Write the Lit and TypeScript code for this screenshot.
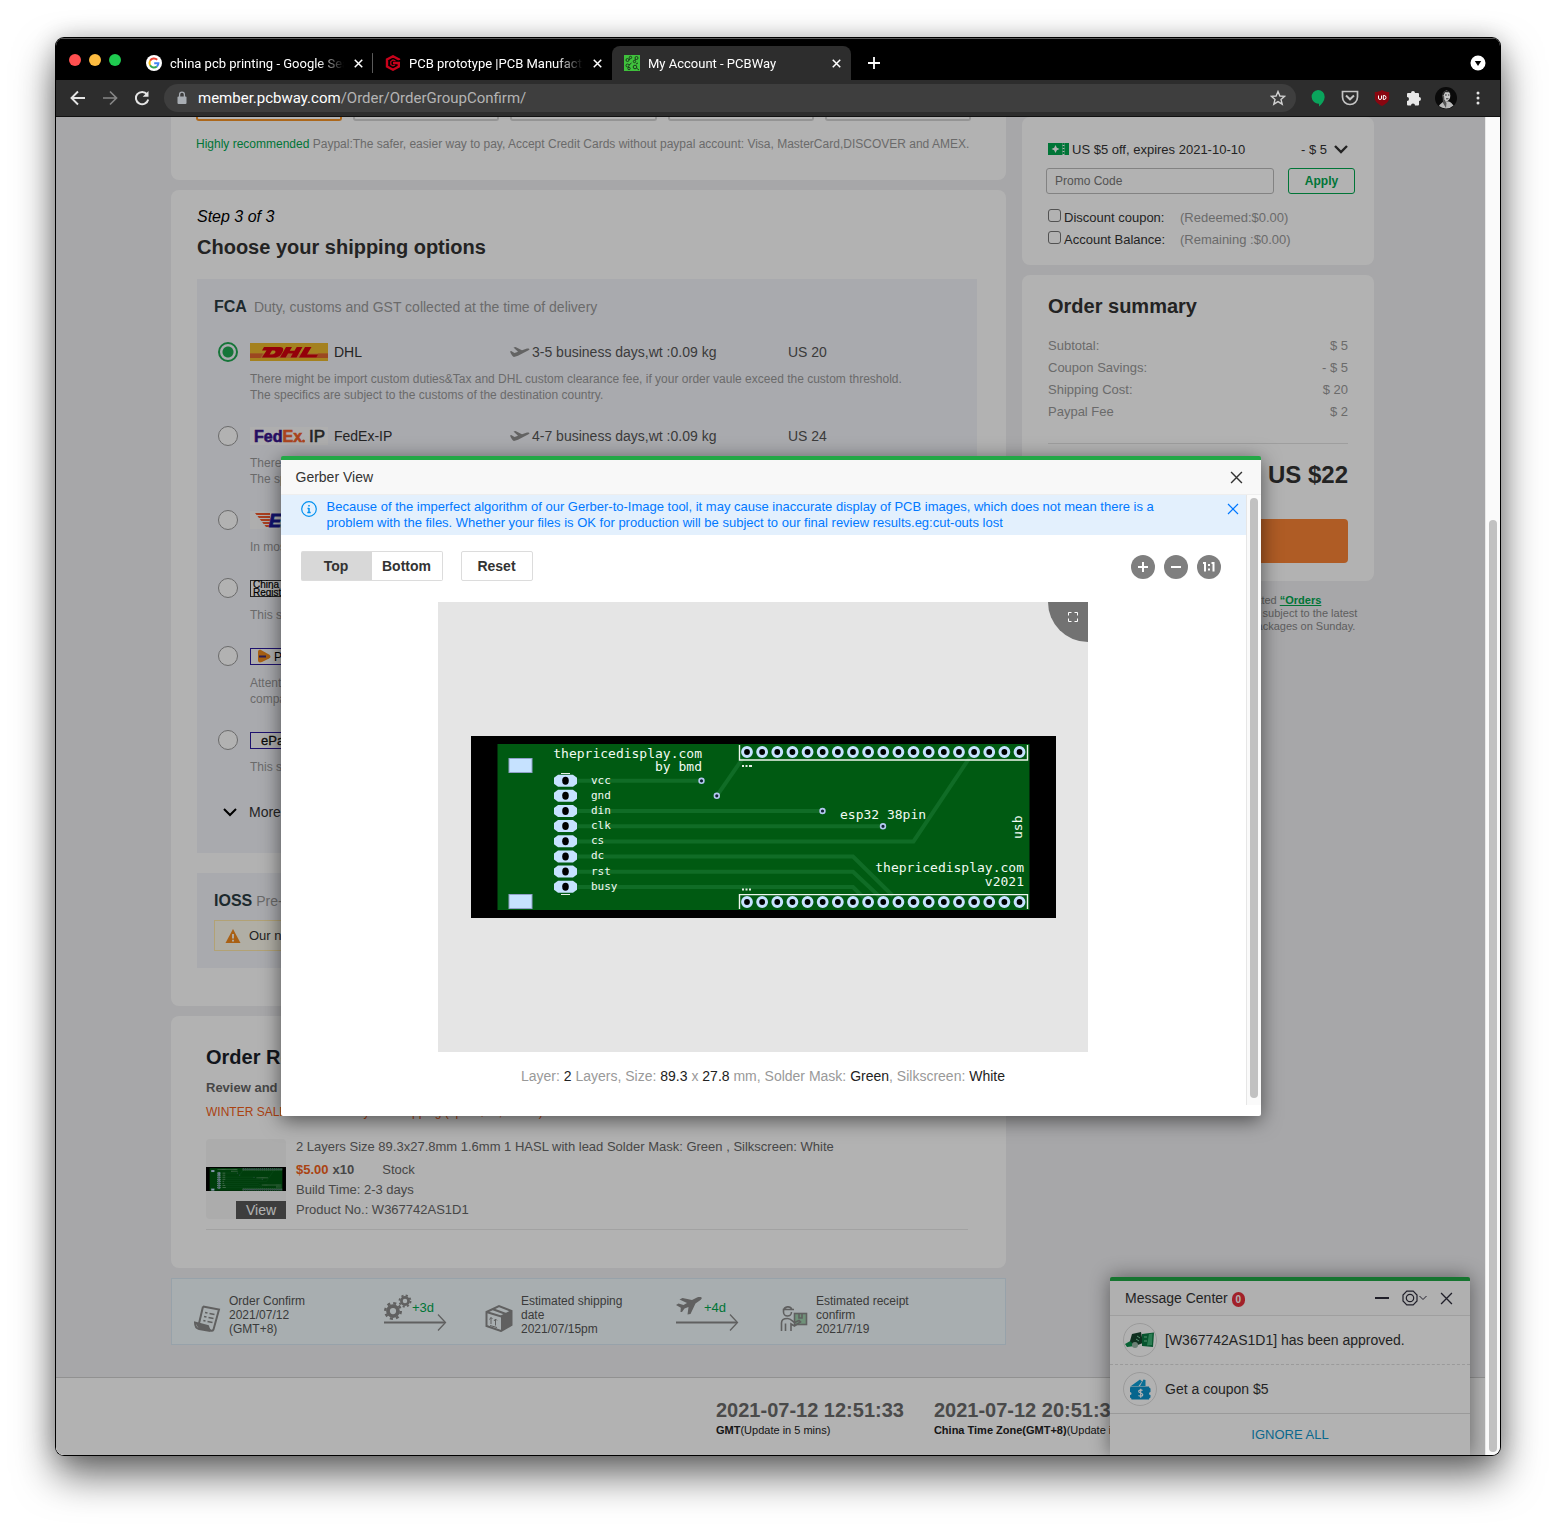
import { LitElement, html, svg, css, nothing } from "lit";
import { customElement } from "lit/decorators.js";
import { classMap } from "lit/directives/class-map.js";

const base = css`
  *,
  *::before,
  *::after {
    box-sizing: border-box;
  }
  h1,
  h2,
  p,
  dl,
  dd,
  ul {
    margin: 0;
    padding: 0;
  }
  button {
    font: inherit;
    color: inherit;
    background: none;
    border: 0;
    padding: 0;
    cursor: pointer;
  }
  svg {
    display: block;
    flex: none;
  }
`;

/* ---------- circuit board drawing ---------- */

const pinXs = Array.from({ length: 19 }, (_, i) => 747 + i * 15.14);
const padYs = Array.from({ length: 8 }, (_, i) => 780.7 + i * 15.14);
const padNames = ["vcc", "gnd", "din", "clk", "cs", "dc", "rst", "busy"];
const vias = [
  [701.5, 780.8],
  [716.8, 795.8],
  [822.5, 811],
  [883, 826.3],
];

const board = (labels: boolean) => html`
  <svg class="board" viewBox="471 736 585 182" role="img" aria-label="Board preview">
    <rect x="471" y="736" width="585" height="182" fill="#000" />
    <rect x="497.5" y="744" width="532" height="166" fill="#005a12" />
    <g fill="none" stroke="#106c26" stroke-width="4">
      <path d="M577 780.8H701" />
      <path d="M716.8 795.8L743 758" />
      <path d="M577 811H822" />
      <path d="M577 826.3H883" />
      <path d="M577 841.4H913.5L970 757" />
      <path d="M577 856.5H853L893 896" />
      <path d="M577 871.8H853L881 898" />
      <path d="M577 887H853L864 898" />
    </g>
    <g fill="#c6e2ff" stroke="#8fa0c8" stroke-width="1">
      <rect x="509" y="758.5" width="23" height="14" />
      <rect x="509" y="894.5" width="23" height="14" />
    </g>
    <path d="M561 773.5H570M561 894.5H570" stroke="#e6f0e6" stroke-width="1" />
    ${padYs.map(
      (y) => svg`<g>
        <path d=${`M558 ${y - 6}H573L577 ${y - 3}V${y + 3}L573 ${y + 6}H558L554 ${y + 3}V${y - 3}Z`} fill="#c6e2ff" />
        <ellipse cx="565.5" cy=${y} rx="3.3" ry="4" fill="#000" /></g>`
    )}
    <g fill="none" stroke="#eef6ee" stroke-width="1.4">
      <path d="M739.5 745V760H1027.5V745" />
      <path d="M739.5 909V894.6H1027.5V909" />
    </g>
    ${[752, 902].map((y) =>
      pinXs.map(
        (x) => svg`<circle cx=${x} cy=${y} r="4.4" fill="#000" stroke="#c6e2ff" stroke-width="3" />`
      )
    )}
    ${vias.map(
      ([x, y]) => svg`<circle cx=${x} cy=${y} r="2.4" fill="#123" stroke="#b4c8f0" stroke-width="1.6" />`
    )}
    ${labels
      ? svg`<g class="silk">
          <text x="702" y="758" text-anchor="end">thepricedisplay.com</text>
          <text x="702" y="771" text-anchor="end">by bmd</text>
          <text x="840" y="819">esp32 38pin</text>
          <text x="1024" y="872" text-anchor="end">thepricedisplay.com</text>
          <text x="1024" y="886" text-anchor="end">v2021</text>
          <text transform="translate(1022 839) rotate(-90)">usb</text>
          ${padNames.map((n, i) => svg`<text class="pad-name" x="591" y=${padYs[i] + 3}>${n}</text>`)}
        </g>
        <path d="M742 766h2m1.500 0h2m1.500 0h3" stroke="#e6f0e6" stroke-width="2" />
        <path d="M742 889.500h2m1.500 0h2m1.500 0h2" stroke="#e6f0e6" stroke-width="2" />`
      : svg`<path d="M556 754H702M655 767H702M841 815H925M879 868H1024M984 882H1024" stroke="#9fc0a5" stroke-width="5" stroke-dasharray="6 2" />
        <path d="M592 781h20M592 796h20M592 811h20M592 826h20M592 841h12M592 856h12M592 871h20M592 886h24" stroke="#9fc0a5" stroke-width="4" />`}
  </svg>
`;

/* ---------- shared glyphs ---------- */

const cross = (size: number, width = 1.5) => html`
  <svg width=${size} height=${size} viewBox="0 0 12 12" fill="none" stroke="currentColor" stroke-width=${width}>
    <path d="M1 1L11 11M11 1L1 11" />
  </svg>
`;

const chevron = (width = 2) => html`
  <svg width="14" height="14" viewBox="0 0 14 14" fill="none" stroke="currentColor" stroke-width=${width}>
    <path d="M1 4L7 10L13 4" />
  </svg>
`;

/* ---------- browser bars ---------- */

const googleIcon = html`<svg width="16" height="16" viewBox="0 0 16 16">
  <circle cx="8" cy="8" r="8" fill="#fff" />
  <g fill="none" stroke-width="2">
    <path d="M11.200 4.800A4.500 4.500 0 0 0 4.100 5.750" stroke="#ea4335" />
    <path d="M4.100 5.750A4.500 4.500 0 0 0 4.100 10.250" stroke="#fbbc05" />
    <path d="M4.100 10.250A4.500 4.500 0 0 0 10.900 11.450" stroke="#34a853" />
    <path d="M10.900 11.450A4.500 4.500 0 0 0 12.400 8.200H8.200" stroke="#4285f4" />
  </g>
</svg>`;

const hexIcon = html`<svg width="16" height="16" viewBox="0 0 16 16" fill="none" stroke="#c8021b">
  <path d="M14 5V4.500L8 1.300L2 4.500V11.500L8 14.700L13.800 11.500V8H8" stroke-width="2.400" />
  <path d="M10.500 6L8 5L5.800 6.500V9.600L8 10.900L10 10" stroke-width="1.200" />
</svg>`;

const pcbIcon = html`<svg width="16" height="16" viewBox="0 0 16 16">
  <rect width="16" height="16" fill="#3fc13c" />
  <g fill="none" stroke="#1d3a1d" stroke-width="1">
    <circle cx="3.500" cy="5" r="1.500" />
    <circle cx="6.500" cy="2.500" r="1.200" />
    <circle cx="12.500" cy="3" r="1.500" />
    <circle cx="10.500" cy="6.500" r="1.200" />
    <circle cx="3.500" cy="10.500" r="1.500" />
    <circle cx="5" cy="13.500" r="1.200" />
    <circle cx="11" cy="12" r="1.800" />
    <path d="M5 5L6 3.700M11.500 4L11 5.300M5 10L7.500 8M4 12L4.500 12.500M12.500 13L15 15M14 8L12 9" />
  </g>
</svg>`;

@customElement("browser-bars")
export class BrowserBars extends LitElement {
  static styles = [
    base,
    css`
      :host {
        display: block;
        font-family: Roboto, "Liberation Sans", sans-serif;
        color: #fff;
      }
      .strip {
        display: flex;
        align-items: flex-end;
        height: 42px;
        background: #000;
        border-top: 1px solid #5a5a5a;
        padding-right: 14px;
      }
      .lights {
        display: flex;
        gap: 8px;
        width: 78px;
        padding-left: 13px;
        align-self: center;
      }
      .light {
        width: 12px;
        height: 12px;
        border-radius: 50%;
      }
      .red {
        background: #ff5050;
      }
      .amber {
        background: #fdbc40;
      }
      .green {
        background: #1fcb50;
      }
      .tab {
        display: flex;
        align-items: center;
        gap: 8px;
        width: 239px;
        height: 34px;
        padding: 0 9px 0 12px;
        border-radius: 8px 8px 0 0;
        font-size: 13px;
      }
      .tab.active {
        background: #2d2d2d;
      }
      .tab.ruled {
        background: linear-gradient(#5a5a5a, #5a5a5a) right center / 1px 20px no-repeat;
      }
      .title {
        flex: 1;
        overflow: hidden;
        white-space: nowrap;
        mask-image: linear-gradient(to right, #000 85%, transparent);
      }
      .icon-button {
        display: grid;
        place-items: center;
        width: 32px;
        height: 28px;
        color: #e4e4e4;
      }
      .tab .icon-button {
        width: 12px;
        color: #fff;
      }
      .plus {
        align-self: flex-end;
        height: 34px;
        margin-left: 7px;
      }
      .spacer {
        flex: 1;
      }
      .caret {
        display: grid;
        place-items: center;
        height: 34px;
      }
      .toolbar {
        display: flex;
        align-items: center;
        height: 37px;
        padding: 0 6px;
        background: #2d2d2d;
        border-bottom: 1px solid #111;
      }
      .address {
        flex: 1;
        display: flex;
        align-items: center;
        gap: 10px;
        height: 28px;
        margin: 0 6px;
        padding: 0 2px 0 12px;
        border-radius: 14px;
        background: #3e3e3e;
        font-size: 15px;
      }
      .url {
        flex: 1;
        color: #b4b4b4;
      }
      .host {
        color: #fff;
      }
      .faded {
        color: #858585;
      }
    `,
  ];

  private tab(icon: unknown, title: string, cls = {}) {
    return html`<div class=${classMap({ tab: true, ...cls })}>
      ${icon}<span class="title">${title}</span>
      <button class="icon-button" aria-label="Close tab">${cross(9, 2)}</button>
    </div>`;
  }

  render() {
    return html`
      <div class="strip">
        <div class="lights">
          <span class="light red"></span><span class="light amber"></span><span class="light green"></span>
        </div>
        ${this.tab(googleIcon, "china pcb printing - Google Search", { ruled: true })}
        ${this.tab(hexIcon, "PCB prototype |PCB Manufacturer")}
        ${this.tab(pcbIcon, "My Account - PCBWay", { active: true })}
        <button class="icon-button plus" aria-label="New tab">
          <svg width="12" height="12" viewBox="0 0 12 12" stroke="#fff" stroke-width="1.800"><path d="M6 0V12M0 6H12" /></svg>
        </button>
        <span class="spacer"></span>
        <button class="caret" aria-label="Search tabs">
          <svg width="16" height="16" viewBox="0 0 16 16">
            <circle cx="8" cy="8" r="7.500" fill="#fff" /><path d="M4.800 6H11.200L8 11Z" fill="#000" />
          </svg>
        </button>
      </div>
      <div class="toolbar">
        <button class="icon-button" aria-label="Back">
          <svg width="16" height="16" viewBox="0 0 16 16" fill="none" stroke="currentColor" stroke-width="1.900">
            <path d="M15 8H2M8 1.500L1.500 8L8 14.500" />
          </svg>
        </button>
        <button class="icon-button faded" aria-label="Forward">
          <svg width="16" height="16" viewBox="0 0 16 16" fill="none" stroke="currentColor" stroke-width="1.700">
            <path d="M1 8H14M8 1.500L14.500 8L8 14.500" />
          </svg>
        </button>
        <button class="icon-button" aria-label="Reload">
          <svg width="16" height="16" viewBox="0 0 16 16" fill="none" stroke="currentColor" stroke-width="2">
            <path d="M13 4.200A6.200 6.200 0 1 0 14.200 9.500" /><path d="M14.500 1V6.800H8.700Z" fill="currentColor" stroke="none" />
          </svg>
        </button>
        <div class="address">
          <svg width="12" height="14" viewBox="0 0 12 14">
            <rect x="1.500" y="5.500" width="9" height="7.500" rx="1" fill="#a8adb3" />
            <path d="M3.600 6V3.600a2.400 2.400 0 0 1 4.800 0V6" fill="none" stroke="#a8adb3" stroke-width="1.300" />
          </svg>
          <span class="url"><span class="host">member.pcbway.com</span>/Order/OrderGroupConfirm/</span>
          <button class="icon-button" aria-label="Bookmark">
            <svg width="16" height="16" viewBox="0 0 16 16" fill="none" stroke="#d0d0d0" stroke-width="1.400">
              <path d="M8 1.500L9.900 6L14.700 6.300L11 9.400L12.200 14.200L8 11.600L3.800 14.200L5 9.400L1.300 6.300L6.100 6Z" />
            </svg>
          </button>
        </div>
        <button class="icon-button" aria-label="Green bubble extension">
          <svg width="16" height="18" viewBox="0 0 16 18"><path d="M8 1a6.700 6.700 0 0 1 6.700 7C14.500 12 12 15 9 17.500V14.700A6.800 6.800 0 0 1 8 1Z" fill="#0aa45c" /></svg>
        </button>
        <button class="icon-button" aria-label="Pocket">
          <svg width="18" height="16" viewBox="0 0 18 16" fill="none" stroke="#c4c4c4" stroke-width="1.700">
            <path d="M1.500 1.500H16.500V7A7.500 7.500 0 0 1 1.500 7Z" /><path d="M5 5.500L9 9.300L13 5.500" stroke-width="2" />
          </svg>
        </button>
        <button class="icon-button" aria-label="Shield extension">
          <svg width="16" height="18" viewBox="0 0 16 18">
            <path d="M8 1C6 2.500 3 3 .8 3V9C.8 13 5 15.500 8 17C11 15.500 15.200 13 15.200 9V3C13 3 10 2.500 8 1Z" fill="#890610" />
            <path d="M4.500 6.500V9a1.500 1.500 0 0 0 3 0V6.500M9.300 6.500V10.500H10a2 2 0 0 0 0-4Z" fill="none" stroke="#fff" stroke-width="1" />
          </svg>
        </button>
        <button class="icon-button" aria-label="Extensions">
          <svg width="16" height="16" viewBox="0 0 16 16">
            <path d="M5 3a2 2 0 0 1 4 0h3a1 1 0 0 1 1 1V7a2 2 0 0 1 0 4v3.500a1 1 0 0 1-1 1H9a2 2 0 0 0-4 0H2a1 1 0 0 1-1-1V11a2 2 0 0 0 0-4V4a1 1 0 0 1 1-1Z" fill="#e8e8e8" />
          </svg>
        </button>
        <button class="icon-button" aria-label="Profile">
          <svg width="22" height="22" viewBox="0 0 22 22">
            <circle cx="11" cy="11" r="11" fill="#0a0a0a" />
            <path d="M4 19C6 15.500 9 15 9.500 14L14 14.500C16 15.500 17.500 17 18.500 18.500A11 11 0 0 1 4 19Z" fill="#b9b9b9" />
            <ellipse cx="11.500" cy="8.800" rx="3.800" ry="5.400" fill="#c9c9c9" />
            <path d="M7.300 8C7 2.500 16 2 15.700 8L14.500 5.300H10L8.800 8Z" fill="#2a2a2a" />
            <path d="M7.500 8L9 8.500 9.500 13 11.500 16 11 21 8 16Z" fill="#555" />
            <path d="M10 8h1.800M13 8h1.400M11 11.800h2.500" stroke="#333" />
          </svg>
        </button>
        <button class="icon-button" aria-label="Menu">
          <svg width="4" height="14" viewBox="0 0 4 14" fill="currentColor">
            <circle cx="2" cy="2" r="1.500" /><circle cx="2" cy="7" r="1.500" /><circle cx="2" cy="12" r="1.500" />
          </svg>
        </button>
      </div>
    `;
  }
}

/* ---------- order page ---------- */

const plane = html`<svg width="20" height="12" viewBox="0 0 20 12" fill="#8f8f8f">
  <path d="M0 5.500L1.200 5L4.500 7L8 5.700L3.500 1.600L5.500 1L12 4.300L17 2.600C19 2 20.500 3.400 18.500 4.300L8 9.800L4 10.900C3 11 1 8.500 0 5.500Z" />
</svg>`;

const dhlLogo = html`<svg width="78" height="18" viewBox="0 0 78 18" role="img" aria-label="DHL logo">
  <rect width="78" height="18" fill="#ebb92d" />
  <path d="M0 10.500H78V15H0Z" fill="#e58a42" />
  <path d="M0 10.500H13L10.500 15H0ZM68 10.500H78V15H66Z" fill="#e0682f" />
  <path d="M14 4H30C34 4 33.500 7 32.500 9C31 12 29 14.500 24 14.500H12L16.500 7.500H22L19.500 11.500H22C25 11.500 27 8 24 7.500H12ZM36 4H42L39.800 7.800H44.500L46.700 4H52.500L46.500 14.500H40.500L42.800 10.500H38L35.700 14.500H30ZM55 4H61.500L57 11.500H68L66.300 14.500H49Z" fill="#d4000f" />
</svg>`;

const fedexLogo = html`<svg width="78" height="18" viewBox="0 0 78 18" class="logo-art">
  <rect width="78" height="18" fill="#fafafa" />
  <text x="4" y="15" font-size="16" font-weight="700" fill="#39148c" stroke="#39148c" stroke-width=".6">Fed<tspan fill="#f2612b" stroke="#f2612b">Ex</tspan></text>
  <circle cx="53.500" cy="14" r="1.500" fill="#f2612b" />
  <text x="59" y="15" font-size="17" fill="#333" stroke="#333" stroke-width=".6">IP</text>
</svg>`;

const emsLogo = html`<svg width="78" height="18" viewBox="0 0 78 18" class="logo-art">
  <rect width="78" height="18" fill="#fafafa" />
  <path d="M5 2L20 2V16H16Z" fill="#f25a2c" />
  <path d="M5 4.500H22M8 7.500H21M10 10.500H20M13 13.500H19" stroke="#fafafa" stroke-width="1" />
  <text x="19" y="16" font-size="18" font-weight="700" font-style="italic" fill="#1a1a9e" stroke="#1a1a9e">EMS</text>
</svg>`;

const chinaLogo = html`<svg width="78" height="17" viewBox="0 0 78 17" class="logo-art">
  <rect x=".5" y=".5" width="77" height="16" fill="#fafafa" stroke="#333" />
  <text x="3" y="8" font-size="10" stroke="#000" stroke-width=".2">China Post</text>
  <text x="3" y="16" font-size="10" stroke="#000" stroke-width=".2">Registered</text>
</svg>`;

const postLogo = html`<svg width="78" height="17" viewBox="0 0 78 17" class="logo-art">
  <rect x=".5" y=".5" width="77" height="16" fill="#fafafa" stroke="#2b1a9e" />
  <path d="M8 3.500C8 2 10 1.500 11 2L19 6.500C21 8 21 9.500 19 10.500L12 14C9 15 8 14 8 12Z" fill="#f08a1d" />
  <path d="M9 8.500H16" stroke="#3b2a7a" stroke-width="2" />
  <text x="24" y="13" font-size="12">PostNL</text>
</svg>`;

const epacketLogo = html`<svg width="78" height="17" viewBox="0 0 78 17" class="logo-art">
  <rect x=".5" y=".5" width="77" height="16" fill="#fafafa" stroke="#2b1a9e" />
  <text x="11" y="13" font-size="13" fill="#111" stroke="#111" stroke-width=".3">ePacket</text>
</svg>`;

interface Carrier {
  id: string;
  logo: unknown;
  name?: string;
  time?: string;
  price?: string;
  notes: string[];
}

const dutyNote = (name: string) => [
  `There might be import custom duties&Tax and ${name} custom clearance fee, if your order vaule exceed the custom threshold.`,
  "The specifics are subject to the customs of the destination country.",
];

const carriers: Carrier[] = [
  { id: "dhl", logo: dhlLogo, name: "DHL", time: "3-5 business days,wt :0.09 kg", price: "US 20", notes: dutyNote("DHL") },
  { id: "fedex", logo: fedexLogo, name: "FedEx-IP", time: "4-7 business days,wt :0.09 kg", price: "US 24", notes: dutyNote("FedEx") },
  { id: "ems", logo: emsLogo, notes: ["In most"] },
  { id: "china", logo: chinaLogo, notes: ["This service"] },
  { id: "post", logo: postLogo, notes: ["Attention", "company"] },
  { id: "epacket", logo: epacketLogo, notes: ["This service"] },
];

const summary = [
  ["Subtotal:", "$ 5"],
  ["Coupon Savings:", "- $ 5"],
  ["Shipping Cost:", "$ 20"],
  ["Paypal Fee", "$ 2"],
];

const receiptIcon = html`<svg width="28" height="28" viewBox="0 0 28 28" fill="none" stroke="#8a8a8a" stroke-width="2">
  <path d="M10 2.500L26 5.500L20.500 25.500C19.500 27.500 17 27 16 25L15 22L2 18.500C2 23 4 24.500 6 25L17.500 27" />
  <path d="M10 2.500L6 19.500" />
  <path d="M2 18.500L15 22L18 27L6 25Z" fill="#8a8a8a" stroke="none" />
  <path d="M12 8.500L14.500 9M16.500 9.500L21.500 10.500M11 12.500L13.500 13M15.500 13.500L20.500 14.500M10.300 16.500L12.500 17M14.500 17.500L19.500 18.500" stroke-width="1.600" />
</svg>`;

const boxIcon = html`<svg width="28" height="28" viewBox="0 0 28 28">
  <path d="M1.500 8L14 2L26.500 7V21L16 27L1.500 22Z" fill="none" stroke="#8a8a8a" stroke-width="2" />
  <path d="M16 12.500L27 7V21L16 27Z" fill="#8a8a8a" />
  <path d="M1.500 8L16 12.500L26.500 7M8 5.200L21 10" fill="none" stroke="#8a8a8a" stroke-width="2" />
  <path d="M6 20V13.500M4.500 15.500L6 13.500L7.500 15M10.500 21.500V15M9 17L10.500 15L12 16.500M5 21.500L12 23.500" fill="none" stroke="#8a8a8a" />
</svg>`;

const courierIcon = html`<svg width="28" height="28" viewBox="0 0 28 28" fill="none" stroke="#8a8a8a" stroke-width="1.600">
  <rect x="14.500" y="9.500" width="12" height="11" fill="#9fd0ae" />
  <path d="M19 10V14H22V10" />
  <path d="M3.500 6.500A4.500 4.500 0 0 1 12 5.500H3.500V8A4 4 0 0 0 11.500 8M12 5.500H14" />
  <path d="M1.500 27V19C1.500 15 4 14.500 7.500 14.500C11 14.500 12 17 14.500 18.500L19 16.500L20.500 18L14.500 22L11 20V27M5.500 27V19.500" />
</svg>`;

const cog = (cx: number, cy: number, r: number) => svg`
  <circle cx=${cx} cy=${cy} r=${r} fill="none" stroke="#8a8a8a" stroke-width=${r * 0.75} />
  <circle cx=${cx} cy=${cy} r=${r * 1.55} fill="none" stroke="#8a8a8a" stroke-width=${r * 0.5}
    stroke-dasharray=${`${r * 0.61} ${r * 0.607}`} />`;

const arrowLine = svg`
  <path d="M0 28.500H61" stroke="#8a8a8a" stroke-width="2" />
  <path d="M54 20.500L61.500 28.500L54 36.500" fill="none" stroke="#8a8a8a" stroke-width="1.300" />`;

const gearsArt = html`<svg width="64" height="40" viewBox="0 0 64 40">
  ${cog(9, 17, 5)}${cog(21, 7, 3.6)}${arrowLine}
</svg>`;

const flightArt = html`<svg width="64" height="40" viewBox="0 0 64 40">
  <path d="M0 11L2.500 9.500L7.500 11L11 9L3.500 5.500L6.500 4L16 6L21 3.500C24 2.500 28 3 24.500 6L19.500 9.500L14.500 20L11.500 20.500L12.500 13L8.500 14.500L6 18L4.500 18L4.800 13.800Z" fill="#8a8a8a" />
  ${arrowLine}
</svg>`;

@customElement("order-page")
export class OrderPage extends LitElement {
  static styles = [
    base,
    css`
      :host {
        display: flex;
        flex-direction: column;
        font-family: "Liberation Sans", Arial, sans-serif;
        font-size: 13px;
        color: #333;
        background: #efeff2;
      }
      .columns {
        flex: 1;
        display: flex;
        gap: 16px;
        padding: 0 111px 31px 115px;
      }
      .left {
        flex: 1;
        min-width: 0;
        display: flex;
        flex-direction: column;
        gap: 10px;
      }
      .right {
        width: 352px;
        display: flex;
        flex-direction: column;
        gap: 10px;
      }
      .card {
        background: #fff;
        border-radius: 8px;
      }
      h2 {
        font-size: 20px;
        line-height: 24px;
        color: #333;
      }
      .pay {
        border-radius: 0 0 8px 8px;
        padding: 0 35px 27px 25px;
      }
      .pay-options {
        display: grid;
        grid-template-columns: repeat(5, 1fr);
        gap: 11px;
        margin-bottom: 14px;
      }
      .pay-option {
        height: 4px;
        border: 2px solid #d4d4d4;
        border-top: 0;
        border-radius: 0 0 3px 3px;
      }
      .pay-option.chosen {
        border-color: #f79428;
      }
      .pay-note {
        font-size: 12px;
        line-height: 18px;
        color: #999;
        white-space: nowrap;
      }
      .accent {
        color: #00a850;
      }
      .shipping {
        padding: 17px 29px 38px 26px;
      }
      .step {
        font-size: 16px;
        line-height: 20px;
        font-style: italic;
        color: #000;
        margin-bottom: 8px;
      }
      .panel {
        background: #f3f4fa;
        margin-top: 20px;
        padding: 16px 17px 17px;
      }
      .panel.tall {
        padding-bottom: 29px;
      }
      .panel-head {
        display: flex;
        align-items: baseline;
        gap: 7px;
        font-size: 14px;
        line-height: 24px;
        color: #999;
      }
      .panel-head.tight {
        gap: 4px;
      }
      .term {
        font-size: 16px;
        font-weight: 700;
        color: #2b3c42;
      }
      .carriers {
        display: flex;
        flex-direction: column;
        gap: 21px;
        margin-top: 21px;
        padding-left: 4px;
      }
      .carrier {
        display: grid;
        grid-template-columns: 20px 248px 266px 1fr;
        column-gap: 12px;
        row-gap: 7px;
        align-items: center;
      }
      .carrier input {
        appearance: none;
        width: 20px;
        height: 20px;
        margin: 0;
        border: 1px solid #999;
        border-radius: 50%;
        background: #fff;
      }
      .carrier input:checked {
        border: 2px solid #20a852;
        background: radial-gradient(circle, #20a852 5px, #f3f4fa 6px);
      }
      .carrier label {
        display: flex;
        align-items: center;
        gap: 6px;
        height: 24px;
        font-size: 14px;
      }
      .logo-art {
        font-family: "Liberation Sans", Arial, sans-serif;
      }
      .time {
        display: flex;
        align-items: center;
        gap: 2px;
        font-size: 14px;
        color: #555;
      }
      .price {
        font-size: 14px;
        color: #555;
      }
      .notes {
        grid-column: 2 / -1;
        font-size: 12px;
        line-height: 16px;
        color: #999;
      }
      .note {
        display: block;
        white-space: nowrap;
      }
      .more {
        display: flex;
        align-items: center;
        gap: 12px;
        height: 24px;
        margin-top: 25px;
        padding-left: 9px;
        font-size: 14px;
      }
      .more svg {
        color: #000;
      }
      .alert {
        display: flex;
        align-items: center;
        gap: 8px;
        height: 31px;
        margin-top: 7px;
        padding-left: 10px;
        border: 1px solid #ffe9a8;
        background: #fdf9ec;
      }
      .review {
        padding: 29px 38px 38px 35px;
      }
      .review h2 {
        color: #1b1f2a;
      }
      .sub {
        margin-top: 10px;
        line-height: 18px;
        font-weight: 700;
        color: #666;
      }
      .promo {
        margin-top: 6px;
        font-size: 12px;
        line-height: 18px;
        color: #f4611a;
      }
      .item {
        display: flex;
        align-items: flex-start;
        gap: 10px;
        margin-top: 18px;
        padding-bottom: 9px;
        border-bottom: 1px solid #e8e8e8;
        line-height: 20px;
        color: #666;
      }
      .thumb {
        position: relative;
        display: flex;
        align-items: center;
        width: 80px;
        height: 80px;
        background: #f6f6f6;
        border-radius: 4px;
      }
      .board {
        width: 100%;
        height: auto;
      }
      .view {
        position: absolute;
        right: 0;
        bottom: 0;
        width: 50px;
        height: 18px;
        background: #585858;
        color: #fff;
        font-size: 14px;
        line-height: 18px;
      }
      .specs {
        display: flex;
        flex-direction: column;
      }
      .board-spec {
        line-height: 16px;
      }
      .cost {
        display: flex;
        gap: 4px;
        margin-top: 5px;
        font-weight: 700;
      }
      .cost .amount {
        color: #f4611a;
      }
      .cost .stock {
        font-weight: 400;
        padding-left: 24px;
      }
      .track {
        display: grid;
        grid-template-columns: 191px 101px 191px 104px 1fr;
        align-items: start;
        padding: 15px 21px 8px;
        min-height: 67px;
        background: #f1fafc;
        border: 1px solid #d8e8f4;
        color: #555;
      }
      .stop {
        display: grid;
        grid-template-columns: 28px 120px;
        gap: 8px;
        align-items: center;
        font-size: 12px;
        line-height: 14px;
      }
      .stop svg {
        margin-top: 6px;
      }
      .leg {
        position: relative;
      }
      .leg span {
        position: absolute;
        left: 28px;
        top: 6px;
        line-height: 16px;
        color: #00a850;
      }
      .coupon {
        padding: 20px 19px 15px 24px;
      }
      .coupon-row {
        display: flex;
        align-items: center;
        gap: 3px;
        height: 24px;
        padding: 0 7px 0 2px;
        width: 100%;
      }
      .coupon-row .off {
        flex: 1;
        text-align: left;
      }
      .coupon-row .minus {
        margin-right: 4px;
      }
      .code {
        display: flex;
        gap: 14px;
        margin: 7px 0 12px;
      }
      .code input {
        flex: 1;
        min-width: 0;
        height: 26px;
        padding: 0 8px;
        border: 1px solid #bbb;
        border-radius: 3px;
        background: transparent;
        font: inherit;
        font-size: 12px;
      }
      .code input::placeholder {
        color: #777;
      }
      .apply {
        width: 67px;
        height: 26px;
        border: 1px solid #00a850;
        border-radius: 3px;
        color: #00a850;
        font-size: 12px;
        font-weight: 700;
      }
      .tick {
        display: grid;
        grid-template-columns: 13px 113px 1fr;
        align-items: center;
        column-gap: 3px;
        height: 22px;
        padding-left: 2px;
      }
      .tick input {
        appearance: none;
        width: 13px;
        height: 13px;
        margin: 0 0 4px;
        border: 1px solid #767676;
        border-radius: 3px;
      }
      .muted {
        color: #999;
      }
      .summary {
        padding: 19px 26px 18px;
      }
      .line {
        display: flex;
        justify-content: space-between;
        line-height: 22px;
        color: #999;
      }
      .lines {
        margin-top: 17px;
        padding-bottom: 20px;
        border-bottom: 1px solid #e2e2e2;
      }
      .total {
        margin: 15px 0 28px;
        text-align: right;
        font-size: 24px;
        font-weight: 700;
        line-height: 32px;
      }
      .submit {
        display: block;
        width: 100%;
        height: 44px;
        border-radius: 4px;
        background: #fb8535;
      }
      .fine {
        padding: 3px 0 0 207px;
        font-size: 11px;
        line-height: 13px;
        color: #888;
        white-space: nowrap;
      }
      .fine .note {
        display: block;
      }
      .fine a {
        color: #00a850;
        font-weight: 700;
      }
      .footer {
        display: flex;
        gap: 30px;
        padding: 20px 0 18px 660px;
        border-top: 1px solid #d0d0d0;
        background: #fff;
        white-space: nowrap;
      }
      .clock {
        font-size: 11px;
        line-height: 14px;
        color: #222;
      }
      .clock strong.now {
        display: block;
        font-size: 20px;
        line-height: 25px;
        color: #6b6b6b;
      }
    `,
  ];

  private carrier(c: Carrier, first: boolean) {
    return html`<div class="carrier">
      <input type="radio" name="carrier" id=${c.id} ?checked=${first} />
      <label for=${c.id} aria-label=${c.name ?? c.id}>${c.logo}${c.name ?? nothing}</label>
      ${c.time
        ? html`<span class="time">${plane}${c.time}</span><span class="price">${c.price}</span>`
        : nothing}
      <div class="notes">${c.notes.map((n) => html`<span class="note">${n}</span>`)}</div>
    </div>`;
  }

  render() {
    return html`
      <div class="columns">
        <div class="left">
          <section class="card pay">
            <div class="pay-options">
              ${[0, 1, 2, 3, 4].map((i) => html`<span class=${classMap({ "pay-option": true, chosen: i === 0 })}></span>`)}
            </div>
            <p class="pay-note">
              <span class="accent">Highly recommended</span> Paypal:The safer, easier way to pay, Accept Credit Cards without paypal account: Visa, MasterCard,DISCOVER and AMEX.
            </p>
          </section>

          <section class="card shipping">
            <p class="step">Step 3 of 3</p>
            <h2>Choose your shipping options</h2>
            <div class="panel tall">
              <div class="panel-head">
                <span class="term">FCA</span><span>Duty, customs and GST collected at the time of delivery</span>
              </div>
              <div class="carriers">${carriers.map((c, i) => this.carrier(c, i === 0))}</div>
              <button class="more">${chevron(2)}<span>More</span></button>
            </div>
            <div class="panel">
              <div class="panel-head tight"><span class="term">IOSS</span><span>Pre-paid</span></div>
              <div class="alert">
                <svg width="16" height="16" viewBox="0 0 16 16">
                  <path d="M8 1L15.500 15H.5Z" fill="#f28a1e" />
                  <path d="M8 6V10.500M8 11.800V13.500" stroke="#fff" stroke-width="1.800" />
                </svg>
                <span>Our new</span>
              </div>
            </div>
          </section>

          <section class="card review">
            <h2>Order Review</h2>
            <p class="sub">Review and</p>
            <p class="promo">WINTER SALE: Get one today free shipping (up to $30,000 off)</p>
            <div class="item">
              <div class="thumb">${board(false)}<button class="view">View</button></div>
              <div class="specs">
                <span class="board-spec">2 Layers Size 89.3x27.8mm 1.6mm 1 HASL with lead Solder Mask: Green , Silkscreen: White</span>
                <span class="cost"><span class="amount">$5.00</span><span>x10</span><span class="stock">Stock</span></span>
                <span>Build Time: 2-3 days</span>
                <span>Product No.: W367742AS1D1</span>
              </div>
            </div>
          </section>

          <section class="track">
            <div class="stop">${receiptIcon}<span>Order Confirm<br />2021/07/12<br />(GMT+8)</span></div>
            <div class="leg">${gearsArt}<span>+3d</span></div>
            <div class="stop">${boxIcon}<span>Estimated shipping date<br />2021/07/15pm</span></div>
            <div class="leg">${flightArt}<span>+4d</span></div>
            <div class="stop">${courierIcon}<span>Estimated receipt confirm<br />2021/7/19</span></div>
          </section>
        </div>

        <aside class="right">
          <section class="card coupon">
            <button class="coupon-row">
              <svg width="21" height="12" viewBox="0 0 21 12">
                <path d="M0 0H14.500V12H0ZM16.500 0H21V12H16.500Z" fill="#00a850" />
                <path d="M15.500 0V12" stroke="#00a850" stroke-width="2" stroke-dasharray="2 1" />
                <path d="M7.500 2L8.800 4.700L11.500 6L8.800 7.300L7.500 10L6.200 7.300L3.500 6L6.200 4.700Z" fill="#fff" />
              </svg>
              <span class="off">US $5 off, expires 2021-10-10</span>
              <span class="minus">- $ 5</span>${chevron(2.4)}
            </button>
            <div class="code">
              <input type="text" placeholder="Promo Code" aria-label="Promo Code" />
              <button class="apply">Apply</button>
            </div>
            <div class="tick">
              <input type="checkbox" id="discount" /><label for="discount">Discount coupon:</label>
              <span class="muted">(Redeemed:$0.00)</span>
            </div>
            <div class="tick">
              <input type="checkbox" id="balance" /><label for="balance">Account Balance:</label>
              <span class="muted">(Remaining :$0.00)</span>
            </div>
          </section>

          <section class="card summary">
            <h2>Order summary</h2>
            <dl class="lines">
              ${summary.map(([k, v]) => html`<div class="line"><dt>${k}</dt><dd>${v}</dd></div>`)}
            </dl>
            <p class="total">US $22</p>
            <button class="submit" aria-label="Submit order"></button>
          </section>

          <p class="fine">
            <span class="note">submitted <a href="#orders">“Orders</a></span>
            <span class="note">will be subject to the latest</span>
            <span class="note">and packages on Sunday.</span>
          </p>
        </aside>
      </div>
      <footer class="footer">
        <div class="clock"><strong class="now">2021-07-12 12:51:33</strong><strong>GMT</strong>(Update in 5 mins)</div>
        <div class="clock">
          <strong class="now">2021-07-12 20:51:33</strong><strong>China Time Zone(GMT+8)</strong>(Update in 5 mins)
        </div>
      </footer>
    `;
  }
}

/* ---------- message center ---------- */

@customElement("message-center")
export class MessageCenter extends LitElement {
  static styles = [
    base,
    css`
      :host {
        display: block;
        font-family: "Liberation Sans", Arial, sans-serif;
        font-size: 14px;
        color: #333;
        background: #fff;
        border-top: 4px solid #20a845;
        border-radius: 2px 2px 0 0;
        box-shadow: 0 0 20px rgba(0, 0, 0, 0.45);
      }
      .head {
        display: flex;
        align-items: center;
        height: 35px;
        padding: 0 17px 0 15px;
        border-bottom: 1px solid #e4e4e4;
        background: #fcfcfc;
      }
      .badge {
        width: 13px;
        height: 15px;
        margin: 2px auto 0 4px;
        border-radius: 7px;
        background: #e8303c;
        color: #fff;
        font-size: 10px;
        font-weight: 700;
        line-height: 15px;
        text-align: center;
      }
      .actions {
        display: flex;
        align-items: center;
        gap: 13px;
        color: #2e2d3c;
      }
      .gear {
        display: flex;
        align-items: center;
        gap: 1px;
      }
      .row {
        display: flex;
        align-items: center;
        gap: 8px;
        height: 49px;
        padding: 0 13px;
        border-bottom: 1px dashed #ddd;
      }
      .row.last {
        border-bottom-style: solid;
      }
      .ignore {
        display: block;
        width: 100%;
        height: 41px;
        color: #0e95cc;
        font-size: 13px;
      }
    `,
  ];

  render() {
    return html`
      <div class="head">
        <span>Message Center</span><span class="badge">0</span>
        <div class="actions">
          <button aria-label="Minimize">
            <svg width="14" height="12" viewBox="0 0 14 12"><path d="M0 6H14" stroke="currentColor" stroke-width="2" /></svg>
          </button>
          <button class="gear" aria-label="Settings">
            <svg width="16" height="16" viewBox="0 0 16 16" fill="none" stroke="currentColor" stroke-width="1.200">
              <path d="M4.800 1.200H11.200L15 5V11L11.200 14.800H4.800L1 11V5Z" /><circle cx="8" cy="8" r="3.700" />
            </svg>
            <svg width="8" height="6" viewBox="0 0 8 6" fill="none" stroke="currentColor"><path d="M.5 1L4 4.500L7.500 1" /></svg>
          </button>
          <button aria-label="Close">${cross(13, 1.2)}</button>
        </div>
      </div>
      <div class="row">
        <svg width="34" height="34" viewBox="0 0 34 34">
          <circle cx="17" cy="17" r="16.500" fill="none" stroke="#ddd" />
          <path d="M2 21L9 17L12 23L4 24Z" fill="#0b8f4c" />
          <path d="M9 11L18 9L20 20L12 23L7 18Z" fill="#17452f" />
          <path d="M19 11L31 9.500L30 24L19 23Z" fill="#0a7a42" />
          <path d="M26 11L29.500 10.500L29 22L24 22.500Z" fill="#3fb478" />
          <circle cx="12" cy="22" r="3" fill="#9bb8a8" />
          <path d="M14 13l3 2M13 16l3 2M21 14h3M21 18h3" stroke="#7fd0a5" />
        </svg>
        <span>[W367742AS1D1] has been approved.</span>
      </div>
      <div class="row last">
        <svg width="34" height="34" viewBox="0 0 34 34">
          <circle cx="17" cy="17" r="16.500" fill="none" stroke="#ddd" />
          <path d="M8 14L17 7.500L19 9.500L15.500 14ZM17 14L20.500 7.500L22.500 8V14Z" fill="#0e9fd6" />
          <path d="M7.500 14.500H26a2 2 0 0 0 1.500 2V20a1.500 1.500 0 0 0 0 3V25.500a2 2 0 0 0-1.500 2H8.500a2 2 0 0 0-1.500-2V23a1.500 1.500 0 0 0 0-3V16.500Z" fill="#0b93cc" />
          <path d="M19.500 18.500C18 17.500 15.500 18 15.700 19.500C16 21.500 19.800 20.500 19.800 22.700C19.800 24.500 17 24.500 15.500 23.500M17.700 16.800V25.700" fill="none" stroke="#fff" stroke-width="1.200" />
        </svg>
        <span>Get a coupon $5</span>
      </div>
      <button class="ignore">IGNORE ALL</button>
    `;
  }
}

/* ---------- gerber dialog ---------- */

@customElement("gerber-dialog")
export class GerberDialog extends LitElement {
  static styles = [
    base,
    css`
      :host {
        display: flex;
        flex-direction: column;
        font-family: "Liberation Sans", Arial, sans-serif;
        color: #333;
        background: #fff;
        border-top: 4px solid #22a846;
        border-radius: 2px;
        box-shadow: 0 4px 20px rgba(0, 0, 0, 0.55);
      }
      .head {
        display: flex;
        justify-content: space-between;
        align-items: center;
        height: 35px;
        padding: 0 18px 0 15px;
        background: #f8f8f8;
        border-bottom: 1px solid #eee;
        font-size: 14px;
      }
      .body {
        display: flex;
        margin-bottom: 11px;
      }
      .content {
        flex: 1;
        padding-bottom: 19px;
      }
      .rail {
        width: 15px;
        padding: 3px;
        background: #fafafa;
        border-left: 1px solid #e6e6e6;
      }
      .thumb {
        width: 8px;
        height: 600px;
        border-radius: 4px;
        background: #c1c1c1;
      }
      .banner {
        display: flex;
        gap: 10px;
        padding: 4px 7px 4px 20px;
        background: #e3f0fd;
        color: #0078ff;
        font-size: 13px;
        line-height: 16px;
      }
      .banner svg {
        margin-top: 2px;
      }
      .banner p {
        flex: 1;
        max-width: 860px;
        padding-right: 10px;
      }
      .banner button {
        margin: 2px 0 auto auto;
      }
      .tools {
        display: flex;
        align-items: center;
        padding: 16px 25px 21px 20px;
        font-size: 14px;
        font-weight: 700;
      }
      .side,
      .reset {
        width: 71px;
        height: 30px;
        border: 1px solid #dcdcdc;
      }
      .side {
        border-left: 0;
        border-radius: 0 2px 2px 0;
      }
      .side.on {
        background: #d8d8d8;
        border-right: 0;
        border-radius: 2px 0 0 2px;
      }
      .reset {
        width: 72px;
        margin: 0 auto 0 18px;
        border-radius: 2px;
      }
      .zooms {
        display: flex;
        gap: 9px;
        padding-top: 2px;
      }
      .canvas {
        position: relative;
        display: flex;
        align-items: center;
        width: 650px;
        height: 450px;
        margin: 0 auto;
        padding: 0 32px 0 33px;
        background: #e5e5e5;
      }
      .board {
        width: 100%;
        height: auto;
      }
      .silk {
        font-family: "DejaVu Sans Mono", "Liberation Mono", monospace;
        font-size: 13px;
        fill: #f2faf2;
      }
      .pad-name {
        font-size: 11px;
      }
      .expand {
        position: absolute;
        top: 0;
        right: 0;
        display: grid;
        place-items: center;
        width: 40px;
        height: 40px;
        padding: 0 0 10px 10px;
        background: #727272;
        border-radius: 0 0 0 40px;
      }
      .caption {
        margin-top: 14px;
        text-align: center;
        font-size: 14px;
        line-height: 20px;
        color: #999;
      }
      .caption span {
        color: #222;
      }
    `,
  ];

  private round(label: string, art: unknown) {
    return html`<button aria-label=${label}>
      <svg width="24" height="24" viewBox="0 0 24 24" fill="none" stroke="#fff" stroke-width="2">
        <circle cx="12" cy="12" r="12" fill="#7f7f7f" stroke="none" />${art}
      </svg>
    </button>`;
  }

  render() {
    return html`
      <div class="head"><span>Gerber View</span><button aria-label="Close">${cross(13, 1.3)}</button></div>
      <div class="body">
        <div class="content">
          <div class="banner">
            <svg width="16" height="16" viewBox="0 0 16 16" fill="none" stroke="#0090f0">
              <circle cx="8" cy="8" r="7.300" stroke-width="1.200" />
              <path d="M8 4V5.600M8 7V12M6.500 7.500H8M6.300 11.600H9.700" stroke-width="1.500" />
            </svg>
            <p>
              Because of the imperfect algorithm of our Gerber-to-Image tool, it may cause inaccurate display of PCB images, which does not mean there is a problem with the files. Whether your files is OK for production will be subject to our final review results.eg:cut-outs lost
            </p>
            <button aria-label="Dismiss">${cross(12, 1.2)}</button>
          </div>
          <div class="tools">
            <button class="side on">Top</button><button class="side">Bottom</button>
            <button class="reset">Reset</button>
            <div class="zooms">
              ${this.round("Zoom in", svg`<path d="M12 7V17M7 12H17" />`)}
              ${this.round("Zoom out", svg`<path d="M7 12H17" />`)}
              ${this.round("Actual size", svg`<path d="M6 8H8V16.500M14.500 8H16.500V16.500" /><path d="M12 9V11M12 13.500V15.500" />`)}
            </div>
          </div>
          <div class="canvas">
            ${board(true)}
            <button class="expand" aria-label="Full screen">
              <svg width="10" height="10" viewBox="0 0 10 10" fill="none" stroke="#fff">
                <path d="M.5 3.500V.5H3.500M6.500 .5H9.500V3.500M9.500 6.500V9.500H6.500M3.500 9.500H.5V6.500" />
              </svg>
            </button>
          </div>
          <p class="caption">
            Layer: <span>2</span> Layers, Size: <span>89.3</span> x <span>27.8</span> mm, Solder Mask: <span>Green</span>, Silkscreen: <span>White</span>
          </p>
        </div>
        <div class="rail"><div class="thumb"></div></div>
      </div>
    `;
  }
}

/* ---------- desktop window ---------- */

@customElement("app-root")
export class AppRoot extends LitElement {
  static styles = [
    base,
    css`
      :host {
        display: flex;
        box-sizing: border-box;
        min-height: 100vh;
        padding: 38px 56px 74px;
        background: #fff;
      }
      .window {
        flex: 1;
        min-width: 0;
        display: flex;
        flex-direction: column;
        overflow: hidden;
        border-radius: 8px;
        box-shadow: 0 0 0 1px #000, 0 20px 40px rgba(0, 0, 0, 0.6), 0 0 24px rgba(0, 0, 0, 0.2);
      }
      .viewport {
        flex: 1;
        display: flex;
        min-height: 0;
      }
      .stage {
        position: relative;
        flex: 1;
        min-width: 0;
        display: flex;
        overflow: hidden;
      }
      order-page {
        flex: 1;
        min-width: 0;
      }
      message-center {
        position: absolute;
        right: 15px;
        bottom: 0;
        width: 360px;
      }
      .dim {
        position: absolute;
        inset: 0;
        display: grid;
        place-items: center;
        background: rgba(0, 0, 0, 0.3);
      }
      gerber-dialog {
        width: 980px;
      }
      .rail {
        display: flex;
        align-items: flex-end;
        width: 15px;
        padding: 3px;
        background: #fafafa;
        border-left: 1px solid #e8e8e8;
      }
      .thumb {
        width: 8px;
        height: 70%;
        border-radius: 4px;
        background: #c1c1c1;
      }
    `,
  ];

  render() {
    return html`
      <div class="window">
        <browser-bars></browser-bars>
        <div class="viewport">
          <main class="stage">
            <order-page></order-page>
            <message-center></message-center>
            <div class="dim"><gerber-dialog role="dialog" aria-label="Gerber View"></gerber-dialog></div>
          </main>
          <div class="rail"><div class="thumb"></div></div>
        </div>
      </div>
    `;
  }
}
